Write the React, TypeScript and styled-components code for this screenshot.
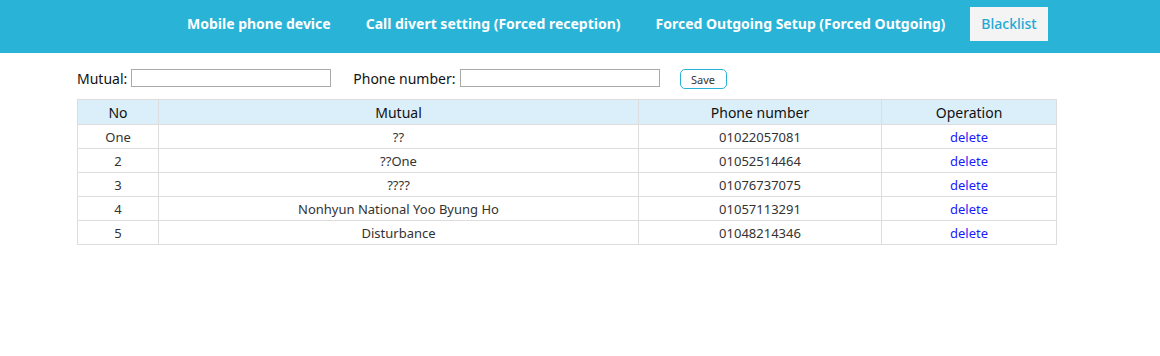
import React from 'react';
import styled, { createGlobalStyle } from 'styled-components';

const GlobalStyle = createGlobalStyle`
	html, body {
		margin: 0;
		padding: 0;
		background: #fff;
		font-family: 'Noto Sans', 'Open Sans', sans-serif;
		color: #333;
	}
`;

const Header = styled.div`
	height: 53px;
	background: #29b3d7;
	display: flex;
	align-items: flex-start;
	padding: 7px 0 0 177px;
	gap: 15px;
	box-sizing: border-box;
`;

const NavItem = styled.div<{ $active?: boolean }>`
	height: 34px;
	line-height: 34px;
	padding: 0 ${(p) => (p.$active ? '11px' : '10px')};
	font-size: 14px;
	font-weight: ${(p) => (p.$active ? 500 : 700)};
	color: ${(p) => (p.$active ? '#22a9d3' : '#fff')};
	background: ${(p) => (p.$active ? '#f4f4f4' : 'transparent')};
	white-space: nowrap;
`;

const Toolbar = styled.div`
	display: flex;
	align-items: center;
	padding: 14px 0 0 77px;
	height: 22px;
`;

const Field = styled.label`
	display: flex;
	align-items: center;
	font-size: 14px;
	color: #111;
	margin-right: 22px;
`;

const TextInput = styled.input`
	width: 200px;
	height: 18px;
	box-sizing: border-box;
	border: 1px solid #a9a9a9;
	margin: 0 0 0 4px;
	padding: 0 2px;
	font-size: 12px;
`;

const SaveButton = styled.button`
	width: 47px;
	height: 20px;
	border: 1px solid #29b3d7;
	border-radius: 5px;
	background: #fff;
	color: #333;
	font-family: 'Noto Sans', sans-serif;
	font-size: 11px;
	padding: 0;
	margin: 2px 0 0 -2px;
`;

const Table = styled.table`
	margin: 10px 0 0 77px;
	width: 980px;
	border-collapse: collapse;
	table-layout: fixed;
`;

const HeadCell = styled.th<{ $w?: number }>`
	width: ${(p) => (p.$w ? `${p.$w}px` : 'auto')};
	height: 24px;
	padding: 0;
	background: #dbeffb;
	border: 1px solid #ddd;
	font-size: 14px;
	font-weight: 400;
	color: #111;
`;

const Cell = styled.td`
	height: 23px;
	padding: 0;
	border: 1px solid #ddd;
	text-align: center;
	font-size: 13px;
	color: #333;
`;

const DeleteLink = styled.a`
	color: #1a1aff;
	text-decoration: none;
	cursor: pointer;
`;

const rows = [
	{ no: 'One', mutual: '??', phone: '01022057081' },
	{ no: '2', mutual: '??One', phone: '01052514464' },
	{ no: '3', mutual: '????', phone: '01076737075' },
	{ no: '4', mutual: 'Nonhyun National Yoo Byung Ho', phone: '01057113291' },
	{ no: '5', mutual: 'Disturbance', phone: '01048214346' }
];

const App = () => {
	return (
		<>
			<GlobalStyle />
			<Header>
				<NavItem>Mobile phone device</NavItem>
				<NavItem>Call divert setting (Forced reception)</NavItem>
				<NavItem>Forced Outgoing Setup (Forced Outgoing)</NavItem>
				<NavItem $active>Blacklist</NavItem>
			</Header>
			<Toolbar>
				<Field>
					Mutual:
					<TextInput type='text' />
				</Field>
				<Field>
					Phone number:
					<TextInput type='text' />
				</Field>
				<SaveButton>Save</SaveButton>
			</Toolbar>
			<Table>
				<thead>
					<tr>
						<HeadCell $w={80}>No</HeadCell>
						<HeadCell $w={479}>Mutual</HeadCell>
						<HeadCell $w={242}>Phone number</HeadCell>
						<HeadCell>Operation</HeadCell>
					</tr>
				</thead>
				<tbody>
					{rows.map((r) => (
						<tr key={r.phone}>
							<Cell>{r.no}</Cell>
							<Cell>{r.mutual}</Cell>
							<Cell>{r.phone}</Cell>
							<Cell>
								<DeleteLink>delete</DeleteLink>
							</Cell>
						</tr>
					))}
				</tbody>
			</Table>
		</>
	);
};

export default App;
